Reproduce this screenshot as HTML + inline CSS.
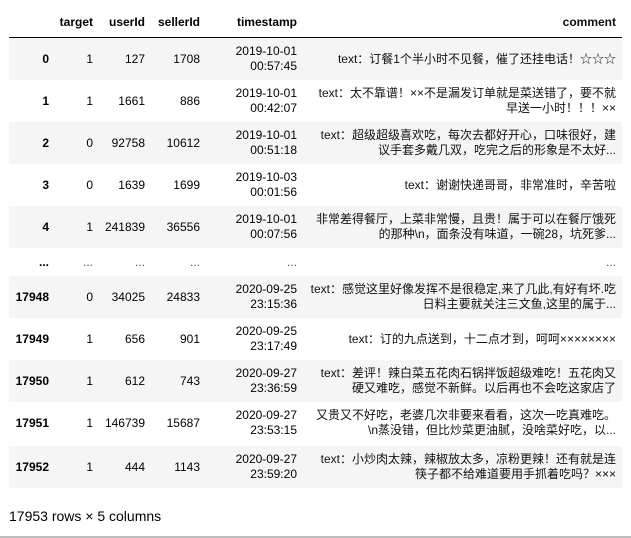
<!DOCTYPE html>
<html><head><meta charset="utf-8"><style>
body{margin:0;width:631px;height:538px;background:#fff;font-family:"Liberation Sans","Noto Sans CJK SC",sans-serif;font-size:12px;color:#000;position:relative;overflow:hidden}
.r{position:absolute;left:9px;width:613px;height:42px}
.g{background:#f5f5f5}
.c{position:absolute;top:0;height:100%;display:flex;align-items:center;justify-content:flex-end;text-align:right;white-space:nowrap;line-height:15px}
.i{left:0;width:40px;font-weight:bold}
.t{left:40px;width:44px}
.u{left:84px;width:52px}
.s{left:136px;width:55px}
.ts{left:191px;width:97px}
.cm{left:290px;width:317px;color:#111}
.h{position:absolute;left:9px;top:8px;width:613px;height:29px;border-bottom:1px solid #000;font-weight:bold}
.h .c{font-weight:bold}
.e .c{color:#555}
.foot{position:absolute;left:9px;top:508px;font-size:14px}
.bl{position:absolute;left:0;top:536px;width:631px;height:2px;background:#bbb}
</style></head><body>
<div class="h"><div class="c t">target</div><div class="c u">userId</div><div class="c s">sellerId</div><div class="c ts">timestamp</div><div class="c cm">comment</div></div>

<div class="r g" style="top:38px"><div class="c i">0</div><div class="c t">1</div><div class="c u">127</div><div class="c s">1708</div><div class="c ts">2019-10-01<br>00:57:45</div><div class="c cm">text：订餐1个半小时不见餐，催了还挂电话！☆☆☆</div></div>
<div class="r" style="top:80px"><div class="c i">1</div><div class="c t">1</div><div class="c u">1661</div><div class="c s">886</div><div class="c ts">2019-10-01<br>00:42:07</div><div class="c cm">text：太不靠谱！××不是漏发订单就是菜送错了，要不就<br>早送一小时！！！××</div></div>
<div class="r g" style="top:122px"><div class="c i">2</div><div class="c t">0</div><div class="c u">92758</div><div class="c s">10612</div><div class="c ts">2019-10-01<br>00:51:18</div><div class="c cm">text：超级超级喜欢吃，每次去都好开心，口味很好，建<br>议手套多戴几双，吃完之后的形象是不太好...</div></div>
<div class="r" style="top:164px"><div class="c i">3</div><div class="c t">0</div><div class="c u">1639</div><div class="c s">1699</div><div class="c ts">2019-10-03<br>00:01:56</div><div class="c cm">text：谢谢快递哥哥，非常准时，辛苦啦</div></div>
<div class="r g" style="top:206px"><div class="c i">4</div><div class="c t">1</div><div class="c u">241839</div><div class="c s">36556</div><div class="c ts">2019-10-01<br>00:07:56</div><div class="c cm">非常差得餐厅，上菜非常慢，且贵！属于可以在餐厅饿死<br>的那种\n，面条没有味道，一碗28，坑死爹...</div></div>
<div class="r e" style="top:248px;height:28px"><div class="c i" style="color:#000">...</div><div class="c t">...</div><div class="c u">...</div><div class="c s">...</div><div class="c ts">...</div><div class="c cm">...</div></div>
<div class="r g" style="top:276px"><div class="c i">17948</div><div class="c t">0</div><div class="c u">34025</div><div class="c s">24833</div><div class="c ts">2020-09-25<br>23:15:36</div><div class="c cm">text：感觉这里好像发挥不是很稳定,来了几此,有好有坏.吃<br>日料主要就关注三文鱼,这里的属于...</div></div>
<div class="r" style="top:318px"><div class="c i">17949</div><div class="c t">1</div><div class="c u">656</div><div class="c s">901</div><div class="c ts">2020-09-25<br>23:17:49</div><div class="c cm">text：订的九点送到，十二点才到，呵呵××××××××</div></div>
<div class="r g" style="top:360px"><div class="c i">17950</div><div class="c t">1</div><div class="c u">612</div><div class="c s">743</div><div class="c ts">2020-09-27<br>23:36:59</div><div class="c cm">text：差评！辣白菜五花肉石锅拌饭超级难吃！五花肉又<br>硬又难吃，感觉不新鲜。以后再也不会吃这家店了</div></div>
<div class="r" style="top:402px"><div class="c i">17951</div><div class="c t">1</div><div class="c u">146739</div><div class="c s">15687</div><div class="c ts">2020-09-27<br>23:53:15</div><div class="c cm">又贵又不好吃，老婆几次非要来看看，这次一吃真难吃。<br>\n蒸没错，但比炒菜更油腻，没啥菜好吃，以...</div></div>
<div class="r g" style="top:446px"><div class="c i">17952</div><div class="c t">1</div><div class="c u">444</div><div class="c s">1143</div><div class="c ts">2020-09-27<br>23:59:20</div><div class="c cm">text：小炒肉太辣，辣椒放太多，凉粉更辣！还有就是连<br>筷子都不给难道要用手抓着吃吗？×××</div></div>

<div class="foot">17953 rows × 5 columns</div>
<div class="bl"></div>
</body></html>
